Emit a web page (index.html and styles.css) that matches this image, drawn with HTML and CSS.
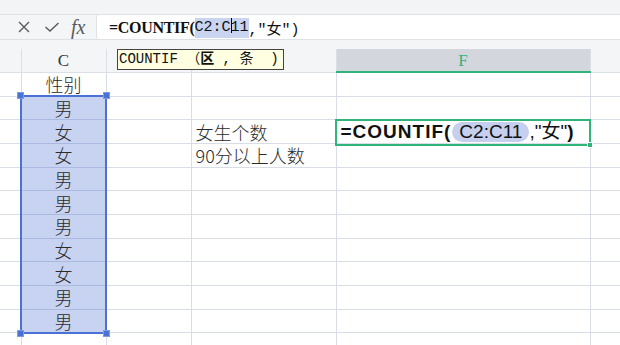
FILE: index.html
```html
<!DOCTYPE html>
<html lang="zh-CN">
<head>
    <meta charset="UTF-8">
    <title>COUNTIF</title>
    <link rel="stylesheet" href="styles.css">
</head>
<body>
    <div class="topstrip"></div>
    <div class="formula-row">
        <div class="fx-btns">
            <svg class="ic-x" width="14" height="14" viewBox="0 0 14 14"><path d="M2 2L12 12M12 2L2 12" stroke="#5a5a5a" stroke-width="1.4" fill="none"/></svg>
            <svg class="ic-ok" width="16" height="12" viewBox="0 0 16 12"><path d="M1.5 6L6 10L14.5 2" stroke="#5a5a5a" stroke-width="1.4" fill="none"/></svg>
            <span class="fx">fx</span>
        </div>
        <div class="formula-input">
            <span class="f-name">=COUNTIF(</span><span class="f-ref">C2:C<i class="caret"></i>11</span><span class="f-rest">,"女")</span>
        </div>
    </div>
    <div class="band"></div>

    <div class="sheet-wrap">
        <table class="sheet">
            <colgroup>
                <col class="w-b"><col class="w-c"><col class="w-d"><col class="w-e"><col class="w-f"><col class="w-g">
            </colgroup>
            <tr class="head">
                <th></th><th>C</th><th></th><th></th><th class="cur">F</th><th></th>
            </tr>
            <tr class="r1">
                <td></td><td class="mid">性别</td><td></td><td></td><td></td><td></td>
            </tr>
            <tr><td></td><td class="mid sel">男</td><td></td><td></td><td></td><td></td></tr>
            <tr>
                <td></td><td class="mid sel">女</td><td></td><td class="lbl">女生个数</td>
                <td class="formula">=COUNTIF(<span class="pill">C2:C11</span><span class="thin">,"女"</span>)</td><td></td>
            </tr>
            <tr><td></td><td class="mid sel">女</td><td></td><td class="lbl">90分以上人数</td><td></td><td></td></tr>
            <tr><td></td><td class="mid sel">男</td><td></td><td></td><td></td><td></td></tr>
            <tr><td></td><td class="mid sel">男</td><td></td><td></td><td></td><td></td></tr>
            <tr><td></td><td class="mid sel">男</td><td></td><td></td><td></td><td></td></tr>
            <tr><td></td><td class="mid sel">女</td><td></td><td></td><td></td><td></td></tr>
            <tr><td></td><td class="mid sel">女</td><td></td><td></td><td></td><td></td></tr>
            <tr><td></td><td class="mid sel">男</td><td></td><td></td><td></td><td></td></tr>
            <tr><td></td><td class="mid sel">男</td><td></td><td></td><td></td><td></td></tr>
            <tr><td></td><td></td><td></td><td></td><td></td><td></td></tr>
        </table>

        <!-- selection C2:C11 -->
        <div class="selection">
            <span class="handle tl"></span><span class="handle tr"></span>
            <span class="handle bl"></span><span class="handle br"></span>
        </div>

        <!-- active cell F3 -->
        <div class="active-box"><span class="fill-handle"></span></div>

        <div class="tip">COUNTIF （<b>区</b> , 条  )</div>
    </div>
</body>
</html>
```

FILE: styles.css
```css
* {
    box-sizing: border-box;
}
body {
    margin: 0;
    width: 620px;
    height: 345px;
    overflow: hidden;
    background: #fff;
    color: #333;
    font-family: "Liberation Sans", "Noto Sans CJK SC", sans-serif;
}
.topstrip {
    height: 15px;
    background: #f3f4f6;
    border-bottom: 1px solid #dfe1e6;
}
.formula-row {
    display: flex;
    height: 25px;
    background: #f4f5f7;
    border-bottom: 1px solid #dfe1e6;
}
.fx-btns {
    width: 96px;
    display: flex;
    align-items: center;
    padding-left: 17px;
}
.ic-ok {
    margin-left: 13px;
}
.fx {
    margin-left: 11px;
    font-family: "Liberation Serif", serif;
    font-style: italic;
    font-size: 20px;
    color: #5a5a5a;
    line-height: 1;
}
.formula-input {
    flex: 1;
    display: flex;
    align-items: center;
    background: #fff;
    border-left: 1px solid #dfe1e6;
    border-radius: 3px 0 0 3px;
    padding: 2px 0 0 12px;
    font-size: 16px;
    color: #111;
}
.f-name {
    font-family: "Liberation Serif", serif;
    font-weight: bold;
    letter-spacing: -0.3px;
}
.f-ref, .f-rest {
    font-family: "Liberation Mono", "Noto Sans CJK SC", monospace;
    font-size: 15px;
}
.f-ref {
    background: #c9d5f0;
    line-height: 20px;
}
.caret {
    display: inline-block;
    width: 1px;
    height: 15px;
    margin-right: -1px;
    background: #000;
    vertical-align: -2px;
}
.band {
    height: 9px;
    background: #f4f5f7;
}

.sheet-wrap {
    position: relative;
}
.sheet {
    border-collapse: collapse;
    table-layout: fixed;
    width: 620px;
}
.w-b { width: 21px; }
.w-c { width: 85px; }
.w-d { width: 85px; }
.w-e { width: 145px; }
.w-f { width: 254px; }
.w-g { width: 30px; }

.sheet td, .sheet th {
    border: 1px solid #d9dde8;
    padding: 0;
    height: 23.7px;
    white-space: nowrap;
    overflow: visible;
}
.sheet tr > :first-child {
    border-left: none;
}
.sheet th {
    border-top: none;
    border-color: #dcdfe6;
    height: 23px;
    background: #f4f5f7;
    font-family: "Liberation Serif", serif;
    font-weight: normal;
    font-size: 17px;
    color: #333;
    padding-top: 1px;
}
.sheet th.cur {
    background: #d3d6dd;
    color: #2db47b;
    border-bottom: 2px solid #2db47b;
}
.sheet .r1 td {
    height: 24px;
}
.sheet td {
    font-family: "Noto Sans CJK SC", sans-serif;
    font-weight: 300;
    font-size: 18px;
    line-height: 20px;
    color: #2b2b2b;
}
.mid {
    text-align: center;
}
.lbl {
    padding-left: 4px !important;
}
.sheet td.sel {
    background: #c7d3f0;
    border-color: #aab9df;
}
.sheet td.formula {
    padding-left: 4px;
    font-family: "Liberation Sans", "Noto Sans CJK SC", sans-serif;
    font-weight: bold;
    font-size: 19px;
    letter-spacing: 1px;
    color: #111;
}
.pill {
    display: inline-block;
    padding: 0 7px;
    margin-left: 1px;
    line-height: 20px;
    border-radius: 10px;
    background: #c6d0ee;
    font-weight: normal;
    letter-spacing: 0;
}
.thin {
    font-weight: normal;
    letter-spacing: 0;
}

.selection {
    position: absolute;
    left: 20px;
    top: 46px;
    width: 87px;
    height: 239px;
    border: 2px solid #4a72d5;
}
.handle {
    position: absolute;
    width: 7px;
    height: 7px;
    background: #4a72d5;
    border: 1px solid #7d9be3;
}
.handle.tl { left: -5px; top: -5px; }
.handle.tr { right: -5px; top: -5px; }
.handle.bl { left: -5px; bottom: -5px; }
.handle.br { right: -5px; bottom: -5px; }

.active-box {
    position: absolute;
    left: 335px;
    top: 70px;
    width: 256px;
    height: 27px;
    border: 2px solid #2fb57a;
}
.fill-handle {
    position: absolute;
    right: -4px;
    bottom: -4px;
    width: 6px;
    height: 6px;
    background: #2fb57a;
    border: 1px solid #fff;
}

.tip {
    position: absolute;
    left: 117px;
    top: 0;
    width: 167px;
    height: 21px;
    padding-left: 1px;
    background: #ffffe1;
    border: 1px solid #444;
    font-family: "Liberation Mono", "Noto Sans CJK SC", monospace;
    font-size: 14px;
    line-height: 19px;
    white-space: pre;
    color: #111;
}
```
